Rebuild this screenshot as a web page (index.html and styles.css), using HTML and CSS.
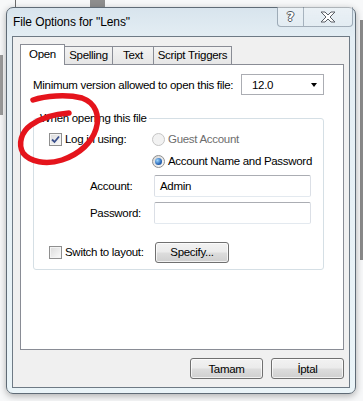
FILE: index.html
```html
<!DOCTYPE html>
<html lang="tr">
<head>
    <meta charset="UTF-8">
    <meta name="viewport" content="width=device-width, initial-scale=1.0">
    <title>File Options for "Lens"</title>
    <link rel="stylesheet" href="styles.css">
</head>
<body>
    <div class="window">
        <div class="titlebar">
            <span class="title">File Options for "Lens"</span>
            <div class="caption">
                <span class="cap-btn help">?</span>
                <span class="cap-btn close">
                    <svg width="16" height="12" viewBox="-1 -1 16 12">
                        <path d="M0,0 h4 l3,3 l3,-3 h4 l-5,5 l5,5 h-4 l-3,-3 l-3,3 h-4 l5,-5 z" fill="#fff" stroke="#5a5f66" stroke-width="1" stroke-linejoin="round"/>
                    </svg>
                </span>
            </div>
        </div>

        <div class="client">
            <div class="tabs">
                <span class="tab active tab-open">Open</span>
                <span class="tab tab-spelling">Spelling</span>
                <span class="tab tab-text">Text</span>
                <span class="tab tab-script">Script Triggers</span>
            </div>

            <div class="panel">
                <div class="version-row">
                    <span>Minimum version allowed to open this file:</span>
                    <div class="select">
                        <span>12.0</span>
                        <span class="arrow"></span>
                    </div>
                </div>

                <fieldset class="group">
                    <legend>When opening this file</legend>
                    <div class="group-body">
                        <div class="login-row">
                            <label class="check">
                                <span class="box checked">
                                    <svg width="9" height="9" viewBox="0 0 9 9">
                                        <path d="M1,4.5 L3.5,7 L8,1.5" fill="none" stroke="#3a4f8c" stroke-width="1.8"/>
                                    </svg>
                                </span>
                                Log in using:
                            </label>
                            <div class="radios">
                                <label class="radio disabled"><span class="dot"></span>Guest Account</label>
                                <label class="radio"><span class="dot on"></span>Account Name and Password</label>
                            </div>
                        </div>

                        <div class="fields">
                            <span class="field-label">Account:</span>
                            <div class="input">Admin</div>
                            <span class="field-label">Password:</span>
                            <div class="input"></div>
                        </div>

                        <div class="layout-row">
                            <label class="check layout-check"><span class="box"></span>Switch to layout:</label>
                            <button class="btn specify">Specify...</button>
                        </div>
                    </div>
                </fieldset>
            </div>

            <div class="footer">
                <button class="btn">Tamam</button>
                <button class="btn">İptal</button>
            </div>
        </div>
    </div>

    <!-- red marker drawn over the screenshot -->
    <svg class="annotation" width="363" height="401" viewBox="0 0 363 401">
        <path d="M33,100 C45,96 66,94 82,98 C96,103 100,116 96,129 C92,142 80,154 62,160 C46,165 30,162 23,153 C18,144 21,132 31,125 C41,118 54,114 69,113"
              fill="none" stroke="#e5141c" stroke-width="5.5" stroke-linecap="round" stroke-linejoin="round"/>
    </svg>
</body>
</html>
```

FILE: styles.css
```css
body {
    margin: 0;
    width: 363px;
    height: 401px;
    overflow: hidden;
    position: relative;
    font-family: "Liberation Sans", Arial, sans-serif;
    font-size: 11.5px;
    letter-spacing: -0.3px;
    white-space: nowrap;
    color: #000;
    background:
        linear-gradient(#8e8e8e, #8e8e8e) 90px 0 / 15px 12px no-repeat,
        linear-gradient(#6d6d6d, #6d6d6d) 15px 0 / 1px 9px no-repeat,
        linear-gradient(#8a8a8a, #8a8a8a) 360px 20px / 3px 240px no-repeat,
        linear-gradient(#9a9a9a, #9a9a9a) 0 55px / 3px 60px no-repeat,
        #f7f8f9;
}
.window {
    margin: 7px 0 0 6px;
    width: 350px;
    height: 387px;
    box-sizing: border-box;
    border: 1px solid #5f6b76;
    border-radius: 7px;
    padding: 0 5px 5px;
    background: linear-gradient(#d8e4ed, #e4eef4 30px, #eaf4f8);
    box-shadow: 0 2px 7px rgba(0, 0, 0, 0.3);
    display: flex;
    flex-direction: column;
}
.titlebar {
    height: 28px;
    display: flex;
    align-items: center;
    flex: none;
}
.title {
    padding-left: 1px;
    font-size: 12px;
    letter-spacing: -0.1px;
}
.caption {
    align-self: flex-start;
    margin-left: auto;
    margin-right: -3px;
    margin-top: -1px;
    display: flex;
    height: 19px;
    border: 1px solid rgba(70, 90, 110, 0.45);
    border-top: none;
    border-radius: 0 0 4px 4px;
    background: linear-gradient(rgba(255, 255, 255, 0.5), rgba(255, 255, 255, 0.15));
}
.cap-btn {
    display: flex;
    align-items: center;
    justify-content: center;
}
.help {
    width: 25px;
    border-right: 1px solid rgba(70, 90, 110, 0.4);
    color: #fff;
    font-family: "DejaVu Sans", sans-serif;
    font-weight: bold;
    font-size: 13px;
    letter-spacing: 0;
    text-shadow: 1px 0 #50555c, -1px 0 #50555c, 0 1px #50555c, 0 -1px #50555c;
}
.close {
    width: 48px;
}
.client {
    flex: none;
    height: 352px;
    box-sizing: border-box;
    border: 1px solid #6e7a85;
    background: #f0f0f0;
    padding: 7px 5px 0 7px;
    display: flex;
    flex-direction: column;
}
.tabs {
    display: flex;
    align-items: flex-end;
    height: 20px;
}
.tab {
    height: 18px;
    box-sizing: border-box;
    border: 1px solid #898c95;
    border-bottom: none;
    margin-left: -1px;
    background: linear-gradient(#f3f3f3, #e6e6e6);
    text-align: center;
    line-height: 17px;
}
.tab.active {
    position: relative;
    z-index: 2;
    height: 21px;
    margin-bottom: -1px;
    margin-left: 0;
    background: #fff;
    line-height: 19px;
}
.tab-open { width: 45px; }
.tab-spelling { width: 49px; }
.tab-text { width: 42px; }
.tab-script { width: 79px; }
.panel {
    width: 324px;
    height: 286px;
    box-sizing: border-box;
    border: 1px solid #898c95;
    background: #fff;
    padding: 9px 0 0 12px;
}
.version-row {
    width: 291px;
    height: 21px;
    display: flex;
    align-items: center;
}
.select {
    margin-left: auto;
    width: 83px;
    height: 21px;
    box-sizing: border-box;
    border: 1px solid #abadb3;
    display: flex;
    align-items: center;
    padding-left: 10px;
}
.arrow {
    margin-left: auto;
    margin-right: 6px;
    width: 0;
    height: 0;
    border-left: 3.5px solid transparent;
    border-right: 3.5px solid transparent;
    border-top: 4px solid #000;
}
.group {
    margin: 15px 0 0;
    width: 291px;
    box-sizing: border-box;
    border: 1px solid #d5dfe5;
    border-radius: 3px;
    padding: 0 0 6px;
}
.group legend {
    margin-left: 4px;
    padding: 0 2px;
    line-height: 16px;
}
.group-body {
    padding: 2px 0 0 15px;
}
.login-row {
    display: grid;
    grid-template-columns: 103px 1fr;
}
.check {
    display: flex;
    align-items: center;
    height: 22px;
}
.box {
    width: 13px;
    height: 13px;
    box-sizing: border-box;
    border: 1px solid #8f8f8f;
    margin-right: 3px;
    background: linear-gradient(135deg, #dadada, #fbfbfb);
    box-shadow: inset 0 0 0 1px #f4f4f4;
    display: flex;
    align-items: center;
    justify-content: center;
}
.radio {
    display: flex;
    align-items: center;
    height: 22px;
}
.radio.disabled {
    color: #6d6d6d;
}
.dot {
    width: 13px;
    height: 13px;
    box-sizing: border-box;
    border-radius: 50%;
    border: 1px solid #8f8f8f;
    margin-right: 3px;
    background: linear-gradient(135deg, #d6d6d6, #fbfbfb);
    display: flex;
    align-items: center;
    justify-content: center;
}
.disabled .dot {
    border-color: #c5c5c5;
    background: #f2f2f2;
}
.dot.on::after {
    content: "";
    width: 7px;
    height: 7px;
    border-radius: 50%;
    background: radial-gradient(circle at 35% 35%, #9fd8ff, #2a68b8 60%, #163f7a);
}
.fields {
    margin: 3px 0 0 41px;
    display: grid;
    grid-template-columns: 64px 157px;
    row-gap: 5px;
    align-items: center;
}
.input {
    height: 22px;
    box-sizing: border-box;
    border: 1px solid #dbdfe6;
    border-top-color: #abadb3;
    border-bottom-color: #e3e9ef;
    border-radius: 2px;
    background: #fff;
    padding-left: 5px;
    line-height: 20px;
}
.layout-row {
    margin-top: 17px;
    display: flex;
    align-items: center;
}
.layout-check {
    width: 106px;
}
.btn {
    font-family: inherit;
    font-size: 11.5px;
    letter-spacing: -0.3px;
    color: #000;
    width: 73px;
    height: 21px;
    box-sizing: border-box;
    padding: 0;
    border: 1px solid #707070;
    border-radius: 3px;
    background: linear-gradient(#f2f2f2 0%, #ebebeb 48%, #dddddd 52%, #cfcfcf 100%);
    box-shadow: inset 0 0 0 1px rgba(255, 255, 255, 0.7);
}
.specify {
    width: 74px;
}
.footer {
    margin-top: 8px;
    display: flex;
    justify-content: flex-end;
    gap: 8px;
}
.annotation {
    position: absolute;
    top: 0;
    left: 0;
    pointer-events: none;
}
```
